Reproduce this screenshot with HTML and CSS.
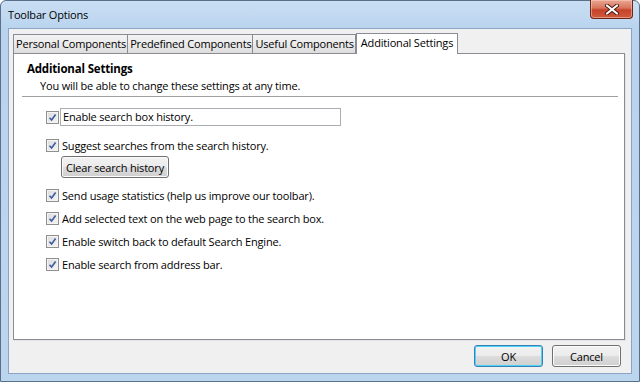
FILE: index.html
```html
<!DOCTYPE html>
<html lang="en">
<head>
  <meta charset="UTF-8" />
  <title>Toolbar Options</title>
  <link rel="stylesheet" href="styles.css">
</head>
<body>
  <div class="window">
    <div class="titlebar">
      <span class="title">Toolbar Options</span>
      <button class="close" aria-label="Close">
        <svg width="14" height="11" viewBox="0 0 14 11">
          <path d="M2 1.5 L12 9.5 M12 1.5 L2 9.5" stroke="#4a1a12" stroke-width="4" stroke-linecap="round" />
          <path d="M2 1.5 L12 9.5 M12 1.5 L2 9.5" stroke="#fff" stroke-width="2.2" stroke-linecap="round" />
        </svg>
      </button>
    </div>

    <div class="client">
      <div class="tabs">
        <div class="tab">Personal Components</div>
        <div class="tab">Predefined Components</div>
        <div class="tab">Useful Components</div>
        <div class="tab active">Additional Settings</div>
      </div>

      <div class="panel">
        <h2>Additional Settings</h2>
        <p class="subtitle">You will be able to change these settings at any time.</p>
        <hr />

        <div class="options">
          <label class="option first">
            <span class="check"><svg width="9" height="9" viewBox="0 0 9 9"><path d="M1.5 4.8 L3.6 7 L7.6 1.5" fill="none" stroke="#3d5a9e" stroke-width="1.6" /></svg></span>
            <span class="boxed">Enable search box history.</span>
          </label>

          <label class="option">
            <span class="check"><svg width="9" height="9" viewBox="0 0 9 9"><path d="M1.5 4.8 L3.6 7 L7.6 1.5" fill="none" stroke="#3d5a9e" stroke-width="1.6" /></svg></span>
            Suggest searches from the search history.
          </label>
          <button class="btn clear-btn">Clear search history</button>

          <label class="option">
            <span class="check"><svg width="9" height="9" viewBox="0 0 9 9"><path d="M1.5 4.8 L3.6 7 L7.6 1.5" fill="none" stroke="#3d5a9e" stroke-width="1.6" /></svg></span>
            Send usage statistics (help us improve our toolbar).
          </label>
          <label class="option">
            <span class="check"><svg width="9" height="9" viewBox="0 0 9 9"><path d="M1.5 4.8 L3.6 7 L7.6 1.5" fill="none" stroke="#3d5a9e" stroke-width="1.6" /></svg></span>
            Add selected text on the web page to the search box.
          </label>
          <label class="option">
            <span class="check"><svg width="9" height="9" viewBox="0 0 9 9"><path d="M1.5 4.8 L3.6 7 L7.6 1.5" fill="none" stroke="#3d5a9e" stroke-width="1.6" /></svg></span>
            Enable switch back to default Search Engine.
          </label>
          <label class="option">
            <span class="check"><svg width="9" height="9" viewBox="0 0 9 9"><path d="M1.5 4.8 L3.6 7 L7.6 1.5" fill="none" stroke="#3d5a9e" stroke-width="1.6" /></svg></span>
            Enable search from address bar.
          </label>
        </div>
      </div>

      <div class="footer">
        <button class="btn ok">OK</button>
        <button class="btn">Cancel</button>
      </div>
    </div>
  </div>
</body>
</html>
```

FILE: styles.css
```css
* {
  box-sizing: border-box;
}

body {
  margin: 0;
  font-family: 'Open Sans', 'Noto Sans', sans-serif;
  font-size: 11px;
  letter-spacing: -0.18px;
  color: #000;
  background: #fff;
}

.window {
  width: 640px;
  height: 382px;
  border: 1px solid #5a6f8a;
  border-radius: 6px 6px 0 0;
  background: linear-gradient(180deg, #c9def3 0%, #b9d3ee 8%, #bcd5ef 100%);
  display: flex;
  flex-direction: column;
}

.titlebar {
  height: 27px;
  display: flex;
  justify-content: space-between;
  align-items: flex-start;
  padding-left: 7px;
  padding-right: 6px;
}

.title {
  margin-top: 6px;
  font-size: 11px;
}

.close {
  width: 43px;
  height: 19px;
  margin-top: -1px;
  border: 1px solid #6b261a;
  border-top: none;
  border-radius: 0 0 4px 4px;
  background: linear-gradient(180deg, #e9a895 0%, #d9735a 45%, #c6432a 55%, #d05a3c 100%);
  box-shadow: inset 0 0 0 1px rgba(255, 210, 195, 0.5);
  display: flex;
  align-items: center;
  justify-content: center;
  padding: 0;
}

.client {
  height: 346px;
  margin: 0 7px;
  background: #f0f0f0;
  border: 1px solid #8ba4c3;
  padding: 3px 6px 0 4px;
  display: flex;
  flex-direction: column;
}

.tabs {
  display: flex;
  align-items: flex-end;
  height: 21px;
}

.tab {
  height: 19px;
  padding: 0 1px 0 2px;
  line-height: 17px;
  border: 1px solid #898c95;
  border-bottom: none;
  margin-right: -1px;
  background: linear-gradient(180deg, #f3f3f3 0%, #ebebeb 50%, #dcdcdc 100%);
  white-space: nowrap;
}

.tab.active {
  height: 21px;
  line-height: 17px;
  background: #fff;
  position: relative;
  margin-bottom: -1px;
  padding: 0 4px;
  margin-left: 1px;
  z-index: 1;
}

.panel {
  height: 287px;
  background: #fff;
  border: 1px solid #898c95;
  box-shadow: 1px 1px 0 #e3e3e3;
  padding: 8px 6px 0 13px;
}

.panel h2 {
  margin: 0;
  font-size: 11.5px;
  font-weight: bold;
  line-height: 14px;
}

.subtitle {
  margin: 2px 0 0 13px;
  line-height: 16px;
}

.panel hr {
  margin: 2px 0 0 -5px;
  border: none;
  border-top: 1px solid #a0a0a0;
}

.options {
  padding-left: 19px;
  padding-top: 11px;
  display: flex;
  flex-direction: column;
  align-items: flex-start;
}

.option {
  display: flex;
  align-items: center;
  height: 18px;
  margin-bottom: 5px;
  white-space: nowrap;
}

.option.first {
  margin-bottom: 10px;
}

.check {
  width: 13px;
  height: 13px;
  margin-right: 3px;
  border: 1px solid #8e8f8f;
  background: linear-gradient(135deg, #dcdcdc 0%, #f4f4f4 100%);
  box-shadow: inset 0 0 0 1px #f4f4f4;
  display: flex;
  align-items: center;
  justify-content: center;
}

.boxed {
  width: 281px;
  height: 18px;
  line-height: 16px;
  padding-left: 2px;
  margin-left: -2px;
  border: 1px solid #abadb3;
}

.btn {
  font-family: inherit;
  font-size: inherit;
  letter-spacing: inherit;
  color: #000;
  border: 1px solid #707070;
  border-radius: 3px;
  background: linear-gradient(180deg, #f2f2f2 0%, #ebebeb 50%, #dddddd 51%, #cfcfcf 100%);
  box-shadow: inset 0 0 0 1px #fcfcfc;
  padding: 0;
}

.clear-btn {
  height: 22px;
  padding: 0 4px;
  margin: -3px 0 8px 15px;
}

.footer {
  display: flex;
  justify-content: flex-end;
  gap: 9px;
  padding: 5px 4px 0 0;
}

.footer .btn {
  width: 69px;
  height: 22px;
}

.btn.ok {
  border-color: #3c7fb1;
  box-shadow: inset 0 0 0 1px #48d4fb;
}
```
